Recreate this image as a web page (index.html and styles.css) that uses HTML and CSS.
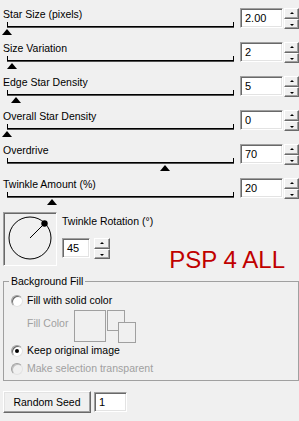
FILE: index.html
```html
<!DOCTYPE html>
<html lang="en">
<head>
  <meta charset="UTF-8">
  <title>Star Effect</title>
  <link rel="stylesheet" href="styles.css">
</head>
<body>
  <div class="sliders">
    <div class="row">
      <div class="left">
        <div class="label">Star Size (pixels)</div>
        <div class="track"><span class="thumb" style="left:-6px"></span></div>
      </div>
      <div class="num">2.00</div>
      <div class="spin"><span class="up"></span><span class="down"></span></div>
    </div>
    <div class="row">
      <div class="left">
        <div class="label">Size Variation</div>
        <div class="track"><span class="thumb" style="left:-1px"></span></div>
      </div>
      <div class="num">2</div>
      <div class="spin"><span class="up"></span><span class="down"></span></div>
    </div>
    <div class="row">
      <div class="left">
        <div class="label">Edge Star Density</div>
        <div class="track"><span class="thumb" style="left:3px"></span></div>
      </div>
      <div class="num">5</div>
      <div class="spin"><span class="up"></span><span class="down"></span></div>
    </div>
    <div class="row">
      <div class="left">
        <div class="label">Overall Star Density</div>
        <div class="track"><span class="thumb" style="left:-6px"></span></div>
      </div>
      <div class="num">0</div>
      <div class="spin"><span class="up"></span><span class="down"></span></div>
    </div>
    <div class="row">
      <div class="left">
        <div class="label">Overdrive</div>
        <div class="track"><span class="thumb" style="left:152px"></span></div>
      </div>
      <div class="num">70</div>
      <div class="spin"><span class="up"></span><span class="down"></span></div>
    </div>
    <div class="row">
      <div class="left">
        <div class="label">Twinkle Amount (%)</div>
        <div class="track"><span class="thumb" style="left:39px"></span></div>
      </div>
      <div class="num">20</div>
      <div class="spin"><span class="up"></span><span class="down"></span></div>
    </div>
  </div>

  <div class="dial-row">
    <div class="dial">
      <svg width="50" height="50" viewBox="0 0 50 50">
        <circle cx="25" cy="24" r="21" fill="none" stroke="#000" stroke-width="1"/>
        <line x1="25" y1="24" x2="39" y2="10" stroke="#000" stroke-width="1"/>
        <circle cx="39.5" cy="9.5" r="3.2" fill="#000"/>
      </svg>
    </div>
    <div class="dial-side">
      <div class="caption">Twinkle Rotation (°)</div>
      <div class="dial-input">
        <div class="num small">45</div>
        <div class="spin"><span class="up"></span><span class="down"></span></div>
      </div>
    </div>
    <div class="brand">PSP 4 ALL</div>
  </div>

  <fieldset class="group">
    <legend>Background Fill</legend>
    <div class="opt first"><span class="radio"></span>Fill with solid color</div>
    <div class="fill-row">
      <span class="muted">Fill Color</span>
      <span class="swatch"></span>
      <svg class="swap" width="30" height="34" viewBox="0 0 30 34">
        <rect x="0.5" y="0.5" width="17" height="20" fill="none" stroke="#a0a0a0"/>
        <rect x="11.5" y="12.5" width="17" height="20" fill="#f0f0f0" stroke="#a0a0a0"/>
      </svg>
    </div>
    <div class="opt"><span class="radio on"></span>Keep original image</div>
    <div class="opt off"><span class="radio"></span>Make selection transparent</div>
  </fieldset>

  <div class="seed-row">
    <button class="btn">Random Seed</button>
    <div class="num seed">1</div>
  </div>
</body>
</html>
```

FILE: styles.css
```css
body {
  margin: 0;
  width: 299px;
  background: #f0f0f0;
  color: #000;
  font-family: "Liberation Sans", Arial, sans-serif;
  font-size: 10.5px;
  line-height: 13px;
}
.sliders {
  display: flex;
  flex-direction: column;
}
.row {
  display: flex;
  height: 34px;
}
.left {
  width: 237px;
}
.label {
  margin: 8px 0 0 3px;
  height: 13px;
  white-space: nowrap;
}
.track {
  position: relative;
  margin: 1px 0 0 7px;
  width: 225px;
  height: 4px;
  border: 1px solid #000;
  border-top: none;
  box-shadow: 0 1px 0 #505050;
}
.thumb {
  position: absolute;
  top: 7px;
  width: 0;
  height: 0;
  border-left: 5.5px solid transparent;
  border-right: 5.5px solid transparent;
  border-bottom: 6px solid #000;
}
.num {
  box-sizing: border-box;
  margin: 8px 0 0 3px;
  width: 43px;
  height: 20px;
  padding: 3px 0 0 4px;
  background: #fff;
  border: 1px solid;
  border-color: #a0a0a0 #fff #fff #a0a0a0;
  box-shadow: inset 1px 1px 0 #696969, inset -1px -1px 0 #e3e3e3;
  font-size: 11px;
}
.spin {
  display: flex;
  flex-direction: column;
  margin: 8px 0 0 1px;
  width: 15px;
  height: 21px;
}
.spin span {
  box-sizing: border-box;
  position: relative;
  flex: 1;
  border: 1px solid;
  border-color: #fff #696969 #696969 #fff;
  box-shadow: inset -1px -1px 0 #a0a0a0;
}
.spin span::after {
  content: "";
  position: absolute;
  left: 5px;
  top: 3px;
  border-left: 2px solid transparent;
  border-right: 2px solid transparent;
}
.spin .up::after {
  border-bottom: 2px solid #000;
}
.spin .down::after {
  top: 4px;
  border-top: 2px solid #000;
}
.dial-row {
  display: flex;
  height: 54px;
  margin-top: 8px;
}
.dial {
  box-sizing: border-box;
  margin-left: 3px;
  width: 54px;
  height: 54px;
  padding: 1px;
  border: 1px solid;
  border-color: #a0a0a0 #fff #fff #a0a0a0;
  box-shadow: inset 1px 1px 0 #696969;
}
.dial svg {
  display: block;
}
.dial-side {
  margin: 3px 0 0 5px;
}
.caption {
  white-space: nowrap;
  height: 13px;
}
.dial-input {
  display: flex;
  margin-top: 2px;
}
.num.small {
  width: 28px;
  margin-left: 0;
}
.dial-input .spin {
  width: 16px;
  margin-left: 4px;
}
.brand {
  margin: 37px 14px 0 auto;
  font-size: 24px;
  line-height: 22px;
  color: #c00000;
  white-space: nowrap;
}
.group {
  margin: 9px 0 0 3px;
  padding: 0 0 5px;
  width: 296px;
  box-sizing: border-box;
  border: 1px solid #a0a0a0;
}
.group legend {
  margin-left: 5px;
  padding: 0 2px;
  line-height: 12px;
}
.opt {
  display: flex;
  align-items: center;
  height: 13px;
  margin-top: 1px;
}
.opt.first {
  margin-top: 7px;
}
.opt.off {
  margin-top: 5px;
  color: #a0a0a0;
}
.radio {
  box-sizing: border-box;
  width: 12px;
  height: 12px;
  margin: 0 4px 0 7px;
  border-radius: 50%;
  background: #fff;
  border: 1px solid;
  border-color: #a0a0a0 #e3e3e3 #e3e3e3 #a0a0a0;
  box-shadow: inset 1px 1px 0 #696969;
  display: flex;
  align-items: center;
  justify-content: center;
}
.radio.on::after {
  content: "";
  width: 4px;
  height: 4px;
  border-radius: 50%;
  background: #000;
}
.opt.off .radio {
  background: #f0f0f0;
  box-shadow: inset 1px 1px 0 #c0c0c0;
}
.fill-row {
  display: flex;
  align-items: flex-start;
  margin-top: 3px;
  height: 33px;
}
.muted {
  color: #a0a0a0;
  margin: 7px 0 0 23px;
}
.swatch {
  box-sizing: border-box;
  width: 32px;
  height: 32px;
  margin-left: 6px;
  border: 1px solid #a0a0a0;
}
.swap {
  margin-left: 1px;
  display: block;
}
.seed-row {
  display: flex;
  margin: 10px 0 0 3px;
}
.btn {
  box-sizing: border-box;
  width: 88px;
  height: 22px;
  padding: 0;
  font: inherit;
  color: #000;
  background: #f0f0f0;
  border: 1px solid;
  border-color: #fff #696969 #696969 #fff;
  box-shadow: inset -1px -1px 0 #a0a0a0, inset 1px 1px 0 #e3e3e3;
}
.num.seed {
  width: 33px;
  margin: 1px 0 0 3px;
}
```
